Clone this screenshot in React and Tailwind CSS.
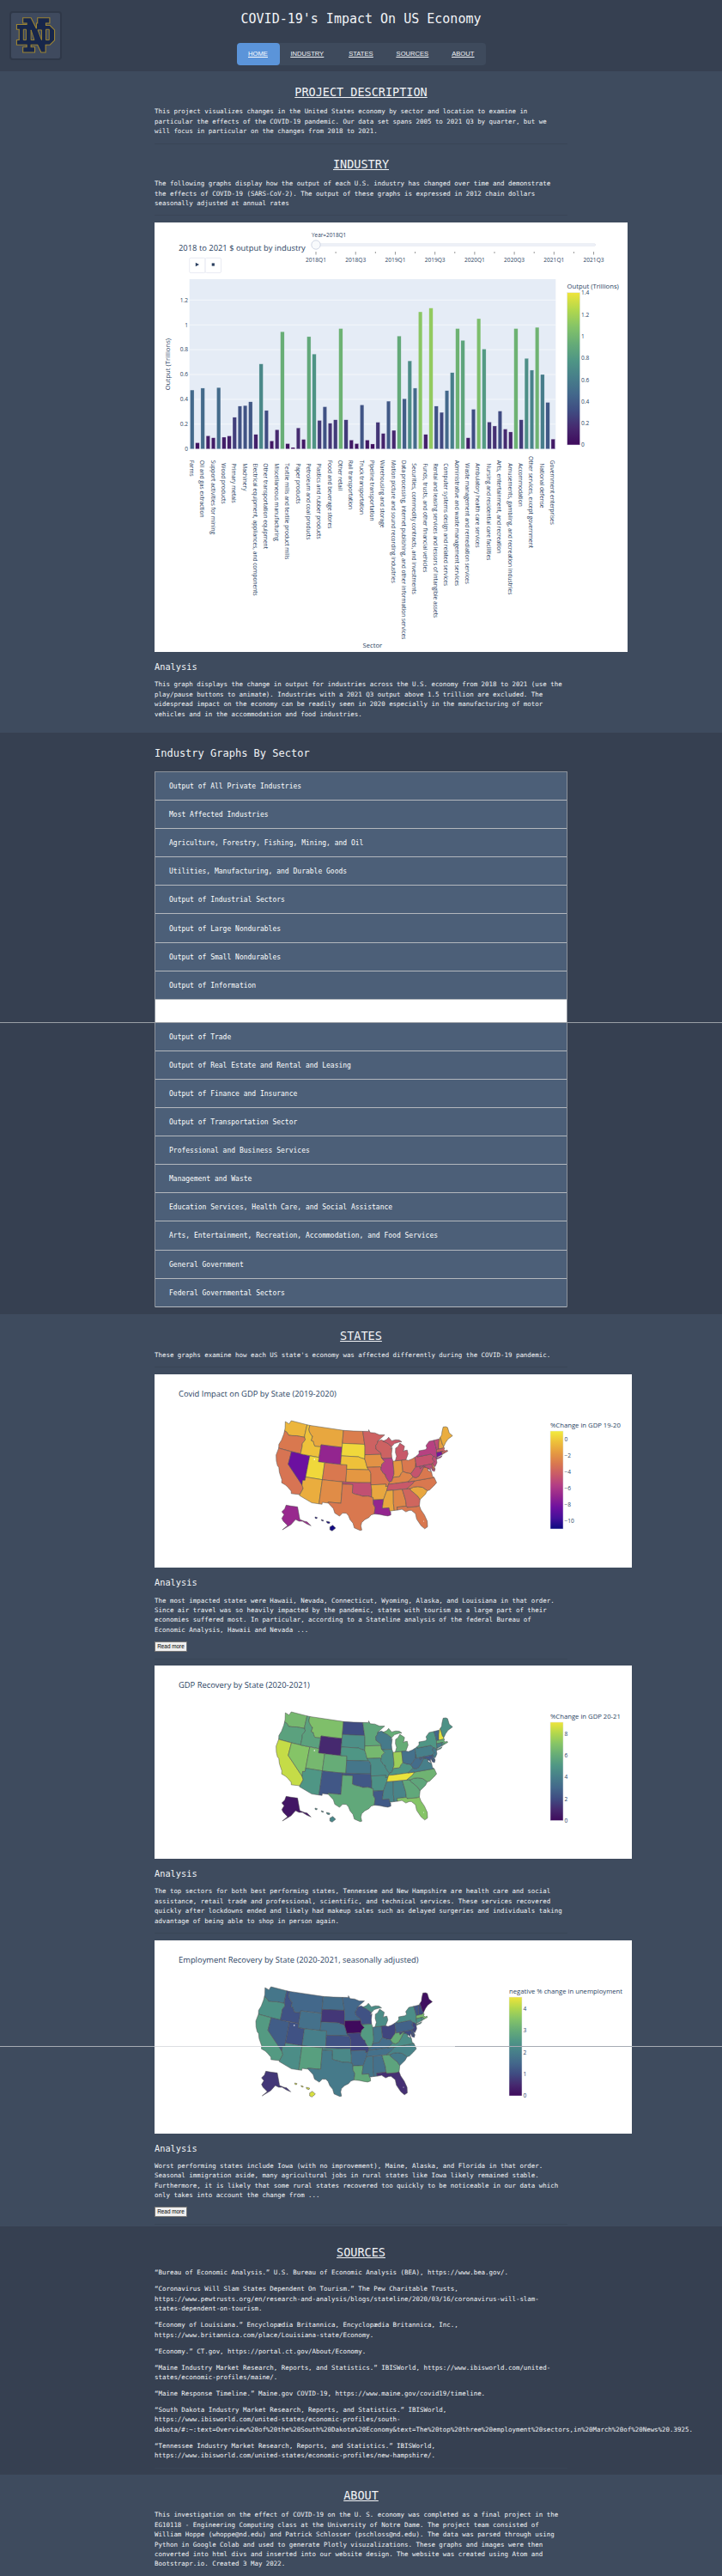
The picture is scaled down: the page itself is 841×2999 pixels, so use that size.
const VIR = ['#3f0a5c','#46296f','#3f4c82','#43688b','#477f8a','#4f9685','#66ac77','#85c467','#b3d84c','#efe43a'];
const PLA = ['#0a0a80','#45109a','#6e10a0','#93258f','#b33d85','#c95a68','#d9784f','#e59a41','#eec03a','#f2ec3c'];

function hex(c) { return [1, 3, 5].map((i) => parseInt(c.slice(i, i + 2), 16)); }
function scale(stops, t) {
  const v = Math.min(1, Math.max(0, t)) * (stops.length - 1);
  const i = Math.min(stops.length - 2, Math.floor(v));
  const a = hex(stops[i]), b = hex(stops[i + 1]), f = v - i;
  return `rgb(${a.map((x, k) => Math.round(x + (b[k] - x) * f)).join(',')})`;
}

const STATES = {
  WA: [[-124.7,48.4],[-123.2,48.15],[-122.8,49],[-117.03,49],[-117.04,46.42],[-116.92,46],[-119,45.93],[-119.6,45.92],[-121.2,45.65],[-122.3,45.55],[-122.8,45.9],[-123.4,46.2],[-124,46.25],[-124.1,46.9]],
  OR: [[-124,46.25],[-123.4,46.2],[-122.8,45.9],[-122.3,45.55],[-121.2,45.65],[-119.6,45.92],[-119,45.93],[-116.92,46],[-116.5,45.5],[-117.2,44.4],[-117.03,43.8],[-117.03,42],[-124.2,42],[-124.5,42.85],[-124.1,44],[-123.95,45.5]],
  CA: [[-124.2,42],[-120,42],[-120,39],[-114.63,35],[-114.13,34.26],[-114.72,32.72],[-117.12,32.53],[-117.3,33.1],[-118.4,33.75],[-119.2,34.15],[-120.5,34.45],[-120.65,35.15],[-121.9,36.6],[-122.5,37.75],[-123,38],[-123.75,39],[-124.35,40.3]],
  NV: [[-120,42],[-114.04,42],[-114.04,36.2],[-114.73,36.1],[-114.63,35],[-120,39]],
  ID: [[-117.03,49],[-116.05,49],[-116.05,48],[-115.7,47.5],[-114.7,46.7],[-114.35,46.65],[-114.5,45.55],[-113.8,45.5],[-113.45,44.95],[-113,44.45],[-111.5,44.55],[-111.05,44.5],[-111.05,42],[-117.03,42],[-117.03,43.8],[-117.2,44.4],[-116.5,45.5],[-116.92,46],[-117.04,46.42]],
  MT: [[-116.05,49],[-104.05,49],[-104.05,45],[-111.05,45],[-111.05,44.5],[-111.5,44.55],[-113,44.45],[-113.45,44.95],[-113.8,45.5],[-114.5,45.55],[-114.35,46.65],[-114.7,46.7],[-115.7,47.5],[-116.05,48]],
  WY: [[-111.05,45],[-107.5,45],[-104.05,45],[-104.05,41],[-107.5,41],[-111.05,41]],
  UT: [[-114.04,42],[-111.05,42],[-111.05,41],[-109.05,41],[-109.05,37],[-114.04,37]],
  CO: [[-109.05,41],[-105.5,41],[-102.05,41],[-102.05,37],[-105.5,37],[-109.05,37]],
  AZ: [[-114.04,37],[-109.05,37],[-109.05,31.33],[-111.07,31.33],[-114.81,32.5],[-114.72,32.72],[-114.13,34.26],[-114.63,35],[-114.73,36.1],[-114.04,36.2]],
  NM: [[-109.05,37],[-103,37],[-103.04,32],[-106.6,32],[-106.53,31.78],[-108.2,31.78],[-108.2,31.33],[-109.05,31.33]],
  ND: [[-104.05,49],[-100.5,49],[-97.23,49],[-96.56,45.94],[-100.5,45.94],[-104.05,45.94]],
  SD: [[-104.05,45.94],[-96.56,45.94],[-96.45,45.3],[-96.45,43.5],[-96.5,42.5],[-97.9,42.8],[-98.5,43],[-104.05,43]],
  NE: [[-104.05,43],[-98.5,43],[-97.9,42.8],[-96.5,42.5],[-96.1,41.6],[-95.9,41],[-95.31,40],[-102.05,40],[-102.05,41],[-104.05,41]],
  KS: [[-102.05,40],[-95.31,40],[-94.9,39.8],[-94.61,39.1],[-94.62,37],[-98.5,37],[-102.05,37]],
  OK: [[-103,37],[-98.5,37],[-94.62,37],[-94.43,35.4],[-94.48,33.64],[-95.5,33.9],[-97,33.85],[-98.1,34.13],[-99.2,34.3],[-100,34.56],[-100,36.5],[-103,36.5]],
  TX: [[-103.04,32],[-103,36.5],[-100,36.5],[-100,34.56],[-99.2,34.3],[-98.1,34.13],[-97,33.85],[-95.5,33.9],[-94.48,33.64],[-94.04,33.55],[-94.04,32],[-93.55,31.2],[-93.85,29.7],[-94.7,29.5],[-95.3,28.9],[-96.4,28.4],[-97.2,27.7],[-97.4,26.9],[-97.15,25.95],[-97.6,25.85],[-99.1,26.4],[-99.5,27.5],[-100.3,28.3],[-100.8,29.25],[-101.4,29.77],[-102.4,29.77],[-103.15,28.98],[-104.5,29.6],[-105,30.65],[-106.53,31.78],[-106.6,32]],
  MN: [[-97.23,49],[-95.15,49],[-95.15,49.38],[-94.6,48.7],[-93,48.6],[-91.4,48.07],[-89.6,48],[-92.05,46.7],[-92.3,46.1],[-92.87,45.6],[-92.75,44.75],[-91.25,43.85],[-91.22,43.5],[-96.45,43.5],[-96.45,45.3],[-96.56,45.94]],
  IA: [[-96.45,43.5],[-91.22,43.5],[-91.1,42.7],[-90.2,41.8],[-91.1,41.2],[-91.42,40.38],[-91.7,40.6],[-95.77,40.58],[-95.9,41],[-96.1,41.6],[-96.5,42.5]],
  MO: [[-95.77,40.58],[-91.7,40.6],[-91.42,40.38],[-91.5,40],[-90.7,39],[-90.2,38.8],[-90.2,38.4],[-89.5,37.3],[-89.13,37],[-89.4,36.5],[-89.7,36],[-90.37,36],[-90.15,36.5],[-94.62,36.5],[-94.62,37],[-94.61,39.1],[-94.9,39.8],[-95.31,40]],
  AR: [[-94.62,36.5],[-90.15,36.5],[-90.37,36],[-89.7,36],[-90.1,35],[-91.15,33],[-94.04,33],[-94.04,33.55],[-94.48,33.64],[-94.43,35.4]],
  LA: [[-94.04,33],[-91.15,33],[-91.6,31],[-89.73,31],[-89.6,30.2],[-89.4,30],[-89.4,29.3],[-90.2,29.1],[-91.3,29.3],[-92.3,29.55],[-93.85,29.7],[-93.55,31.2],[-94.04,32]],
  WI: [[-92.05,46.7],[-90.8,46.9],[-89.1,46.13],[-87.8,45.35],[-87.6,45.1],[-88,44.55],[-87.4,44.9],[-87.8,43.5],[-87.8,42.5],[-90.65,42.5],[-91.1,42.7],[-91.22,43.5],[-91.25,43.85],[-92.75,44.75],[-92.87,45.6],[-92.3,46.1]],
  IL: [[-90.65,42.5],[-87.8,42.5],[-87.53,41.7],[-87.53,39.35],[-87.6,38.7],[-88.05,37.8],[-88.45,37.1],[-89.13,37],[-89.5,37.3],[-90.2,38.4],[-90.2,38.8],[-90.7,39],[-91.5,40],[-91.42,40.38],[-91.1,41.2],[-90.2,41.8],[-91.1,42.7]],
  IN: [[-87.53,41.7],[-87,41.75],[-84.8,41.75],[-84.82,39.1],[-85.4,38.7],[-86,38],[-87.6,38],[-88.05,37.8],[-87.6,38.7],[-87.53,39.35]],
  MI: [[-86.8,41.76],[-84.8,41.75],[-83.45,41.72],[-83.1,42.2],[-82.5,43],[-82.6,43.9],[-83.4,43.9],[-83.9,43.7],[-83.3,44.9],[-84.7,45.75],[-85.5,45],[-86.3,44.7],[-86.5,43.7],[-86.25,42.8]],
  MIU: [[-90.4,46.55],[-89.1,46.13],[-87.8,45.35],[-87.6,45.1],[-86.5,45.8],[-85,46],[-84,46],[-84.8,46.5],[-86,46.65],[-87.4,46.5],[-88.3,47.4],[-89,46.9]],
  OH: [[-84.8,41.75],[-83.45,41.72],[-82.7,41.5],[-81.5,41.7],[-80.52,42],[-80.52,40.64],[-80.8,39.7],[-81.7,39],[-82.3,38.5],[-82.6,38.42],[-83.7,38.65],[-84.82,39.1]],
  KY: [[-89.4,36.5],[-89.13,37],[-88.45,37.1],[-88.05,37.8],[-87.6,38],[-86,38],[-85.4,38.7],[-84.82,39.1],[-83.7,38.65],[-82.6,38.42],[-81.97,37.54],[-83.68,36.6],[-88.07,36.5]],
  TN: [[-90.1,35],[-89.7,36],[-89.4,36.5],[-88.07,36.5],[-83.68,36.6],[-81.68,36.59],[-82.4,36],[-84.32,35]],
  MS: [[-91.15,33],[-90.1,35],[-88.2,35],[-88.47,31.9],[-88.4,30.3],[-89.6,30.2],[-89.73,31],[-91.6,31]],
  AL: [[-88.2,35],[-85.6,35],[-85,32.3],[-85,31],[-87.6,31],[-87.5,30.3],[-88.4,30.3],[-88.47,31.9]],
  GA: [[-85.6,35],[-83.1,35],[-83.35,34.7],[-81.5,33],[-81,32.1],[-81.45,30.7],[-82.2,30.57],[-84.86,30.7],[-85,31],[-85,32.3]],
  FL: [[-87.6,31],[-85,31],[-84.86,30.7],[-82.2,30.57],[-81.45,30.7],[-81.2,29.7],[-80.5,28.4],[-80.03,26.8],[-80.2,25.5],[-81,25.15],[-81.8,26],[-82.7,27.7],[-82.8,29],[-83.8,29.9],[-84.4,29.95],[-85.3,29.7],[-86.3,30.4],[-87.5,30.3]],
  SC: [[-83.35,34.7],[-83.1,35],[-82.3,35.2],[-81,35.15],[-79.7,34.8],[-78.55,33.86],[-79.3,33.1],[-81,32.1],[-81.5,33]],
  NC: [[-84.32,35],[-82.4,36],[-81.68,36.59],[-75.87,36.55],[-75.5,35.25],[-76.5,34.65],[-77.9,33.9],[-78.55,33.86],[-79.7,34.8],[-81,35.15],[-82.3,35.2],[-83.1,35]],
  VA: [[-83.68,36.6],[-81.97,37.54],[-81.2,37.25],[-80.3,37.5],[-79.3,38.4],[-78.35,39.4],[-77.75,39.3],[-77.05,38.85],[-77.3,38.4],[-76.3,37.9],[-76.3,37],[-75.95,36.55],[-81.68,36.59]],
  WV: [[-81.97,37.54],[-82.6,38.42],[-82.3,38.5],[-81.7,39],[-80.8,39.7],[-80.52,40.64],[-80.52,39.72],[-79.48,39.72],[-79.48,39.2],[-78.35,39.65],[-77.75,39.3],[-78.35,39.4],[-79.3,38.4],[-80.3,37.5],[-81.2,37.25]],
  PA: [[-80.52,42],[-79.76,42.27],[-79.76,42],[-75.35,42],[-74.7,41.36],[-75.13,40.97],[-75.2,40.65],[-74.72,40.15],[-75.42,39.8],[-75.79,39.72],[-80.52,39.72]],
  NY: [[-79.76,42.27],[-79,42.7],[-78.9,43.3],[-76.8,43.3],[-76.2,43.55],[-76.3,44.2],[-75,45],[-73.35,45],[-73.25,43.6],[-73.26,42.74],[-73.5,42.05],[-73.65,41],[-73.95,40.75],[-72,41.05],[-72.5,40.7],[-74,40.55],[-74.05,41],[-74.7,41.36],[-75.35,42],[-79.76,42]],
  VT: [[-73.35,45],[-71.5,45],[-72.05,44.1],[-72.45,43],[-72.46,42.73],[-73.26,42.74],[-73.25,43.6]],
  NH: [[-71.5,45],[-71.08,45.3],[-70.98,43.4],[-70.7,43.07],[-70.85,42.87],[-71.3,42.7],[-72.46,42.73],[-72.45,43],[-72.05,44.1]],
  ME: [[-71.08,45.3],[-70.4,45.75],[-70.05,46.4],[-69.2,47.45],[-68.3,47.35],[-67.8,47.05],[-67.8,45.7],[-67,44.85],[-68.8,44.4],[-69.8,43.8],[-70.7,43.07],[-70.98,43.4]],
  MA: [[-73.5,42.05],[-73.26,42.74],[-71.3,42.7],[-70.85,42.87],[-70.65,42.6],[-71,42.3],[-70.6,41.95],[-70,42],[-69.95,41.7],[-71.1,41.5],[-71.38,42.02]],
  CT: [[-73.5,42.05],[-71.8,42.02],[-71.85,41.32],[-73.65,41]],
  RI: [[-71.8,42.02],[-71.38,42.02],[-71.1,41.5],[-71.85,41.32]],
  NJ: [[-74.7,41.36],[-74.05,41],[-74,40.45],[-74.1,39.75],[-74.9,38.95],[-75.5,39.5],[-75.42,39.8],[-74.72,40.15],[-75.2,40.65],[-75.13,40.97]],
  DE: [[-75.79,39.72],[-75.42,39.8],[-75.05,38.45],[-75.7,38.46]],
  MD: [[-79.48,39.72],[-75.79,39.72],[-75.7,38.46],[-75.05,38.45],[-75.4,37.9],[-76,38.2],[-76.2,39],[-76.5,38.5],[-76.3,38],[-77.05,38.85],[-77.75,39.3],[-78.35,39.65],[-79.48,39.2]],
  DC: [[-77.12,38.93],[-77.04,39],[-76.91,38.89],[-77.04,38.79]],
};

const rad = Math.PI / 180;
const p1 = 29.5 * rad, p2 = 45.5 * rad, p0 = 37.5 * rad;
const n = (Math.sin(p1) + Math.sin(p2)) / 2;
const C = Math.cos(p1) ** 2 + 2 * n * Math.sin(p1);
const rho0 = Math.sqrt(C - 2 * n * Math.sin(p0)) / n;
function albers([lon, lat]) {
  const t = n * (lon + 96) * rad;
  const r = Math.sqrt(C - 2 * n * Math.sin(lat * rad)) / n;
  return [r * Math.sin(t), -(rho0 - r * Math.cos(t))];
}
const raw = Object.entries(STATES).map(([k, pts]) => [k, pts.map(albers)]);
const all = raw.flatMap(([, p]) => p);
const minX = Math.min(...all.map((p) => p[0])), maxX = Math.max(...all.map((p) => p[0]));
const minY = Math.min(...all.map((p) => p[1])), maxY = Math.max(...all.map((p) => p[1]));
const MAP_W = 205.6, MAP_H = 127.7;
const SHAPES = raw.map(([k, pts]) => [
  k,
  pts.map(([x, y]) => `${(((x - minX) / (maxX - minX)) * MAP_W).toFixed(2)},${(((y - minY) / (maxY - minY)) * MAP_H).toFixed(2)}`).join(' '),
]);

function local(list) {
  return list.map(([x, y]) => `${((x - 20) / 3).toFixed(2)},${((y - 27) / 3).toFixed(2)}`).join(' ');
}
const ALASKA = local([[55,322],[72,325],[95,328],[103,372],[118,378],[128,380],[142,394],[128,388],[112,378],[100,378],[88,372],[72,390],[42,408],[60,393],[45,378],[40,368],[48,355],[40,345],[50,335]]);
const HAWAII = [
  local([[208,398],[218,392],[228,402],[216,412],[208,408]]),
  local([[196,378],[208,381],[206,386],[198,384]]),
  local([[178,372],[186,375],[184,378],[179,376]]),
  local([[156,363],[164,365],[162,369],[157,368]]),
];

const GDP1 = { WA:-0.7,OR:-3,CA:-3.2,ID:-0.3,NV:-8.4,UT:0.4,AZ:-1,MT:-1.2,WY:-7,CO:-3,NM:-2.2,ND:-2.8,SD:0.4,NE:-0.3,KS:-1.8,OK:-4.8,TX:-3,MN:-4,IA:-2,MO:-3,AR:-1.2,LA:-7,WI:-4,IL:-5.5,IN:-1.8,MI:-4.4,MIU:-4.4,OH:-3,KY:-2.5,TN:-4.4,MS:-1.2,AL:-2.4,GA:-3.8,FL:-3,SC:-1.2,NC:-3,VA:-3,WV:-4.6,PA:-4.6,NY:-5.5,ME:-1,NH:-1.5,VT:-5,MA:-4,CT:-8,RI:-4,NJ:-5,DE:-3,MD:-5,DC:-4,AK:-6.8,HI:-10.8 };
const GDP2 = { WA:6.5,OR:5.5,CA:8.3,ID:5.5,NV:7,UT:6.5,AZ:5,MT:6.8,WY:1,CO:6,NM:2.4,ND:2,SD:4.7,NE:5,KS:3.6,OK:2.4,TX:5.8,MN:5.7,IA:6.5,MO:4.6,AR:4.8,LA:2.5,WI:3.8,IL:4.6,IN:7.5,MI:6,MIU:6,OH:3.4,KY:5,TN:8.9,MS:4.2,AL:4.2,GA:5.8,FL:7,SC:5.7,NC:6.3,VA:4,WV:3.2,PA:4,NY:5,ME:4.8,NH:8.8,VT:3,MA:6,CT:4,RI:5,NJ:3.8,DE:3,MD:2.5,DC:3,AK:0.4,HI:4.3 };
const EMP = { WA:1.8,OR:2.4,CA:2.6,ID:1.1,NV:1.3,UT:1.1,AZ:2.3,MT:1.5,WY:1.7,CO:2,NM:2.7,ND:1.6,SD:0.7,NE:1.7,KS:1.1,OK:2.2,TX:1.9,MN:1.5,IA:0,MO:0.9,AR:1.6,LA:2.9,WI:1.1,IL:2.6,IN:1.8,MI:2.3,MIU:2.3,OH:0.9,KY:1.6,TN:1.7,MS:1.8,AL:1.7,GA:2.8,FL:0.6,SC:1.9,NC:2.1,VA:2.3,WV:3,PA:1.4,NY:2.3,ME:0.1,NH:1,VT:1.2,MA:3.3,CT:2.4,RI:2.5,NJ:0.9,DE:1.2,MD:1,DC:1.5,AK:0.7,HI:4.3 };

const INK = '#2a3f5f';

function Colorbar({ id, stops, x, y, h, title, ticks, w = 15 }) {
  return (
    <g>
      <defs>
        <linearGradient id={id} x1="0" y1="1" x2="0" y2="0">
          {stops.map((c, i) => (
            <stop key={c} offset={i / (stops.length - 1)} stopColor={c} />
          ))}
        </linearGradient>
      </defs>
      <text x={x} y={y - 4.5} fontSize="7.7" fill={INK}>{title}</text>
      <rect x={x} y={y} width={w} height={h} fill={`url(#${id})`} stroke="#e2e5ee" strokeWidth="0.5" />
      {ticks.map(([label, ty]) => (
        <text key={label} x={x + w + 1.5} y={ty + 2.3} fontSize="6.6" fill={INK}>{label}</text>
      ))}
    </g>
  );
}

function MapChart({ id, title, values, color, mapX, cb, width = 556 }) {
  return (
    <svg viewBox={`0 0 ${width} 225`} className="block w-full h-full font-['Open_Sans',sans-serif]">
      <text x="28" y="26" fontSize="9.4" fill={INK}>{title}</text>
      <g transform={`translate(${mapX} 54)`} stroke="#4d4d4d" strokeWidth="0.5" strokeLinejoin="round">
        {SHAPES.map(([k, pts]) => (
          <polygon key={k} points={pts} fill={color(values[k])} />
        ))}
        <polygon points={ALASKA} fill={color(values.AK)} />
        {HAWAII.map((pts) => (
          <polygon key={pts} points={pts} fill={color(values.HI)} />
        ))}
        <circle cx="44.7" cy="45" r="0.8" fill="#fff" stroke="none" />
        <circle cx="172" cy="117" r="0.5" fill="#fff" stroke="none" />
      </g>
      <Colorbar id={id} {...cb} />
    </svg>
  );
}

const BARS = [0.475,0.05,0.49,0.106,0.09,0.495,0.095,0.105,0.255,0.345,0.35,0.38,0.117,0.685,0.31,0.065,0.155,0.945,0.043,0.012,0.17,0.077,0.905,0.765,0.23,0.34,0.207,0.235,0.97,0.235,0.072,0.043,0.355,0.072,0.04,0.215,0.125,0.385,0.15,0.91,0.405,0.71,0.49,1.105,0.117,1.135,0.345,0.295,0.47,0.615,0.97,0.875,0.09,0.32,1.05,0.805,0.217,0.185,0.305,0.16,0.137,0.97,0.235,0.73,0.635,0.98,0.6,0.375,0.08];
const XLABELS = [
  ['Farms',107],['Oil and gas extraction',107],['Support activities for mining',107],['Wood products',118],['Primary metals',118],['Machinery',118],['Electrical equipment, appliances, and components',118],['Other transportation equipment',118],['Miscellaneous manufacturing',118],['Textile mills and textile product mills',118],['Paper products',118],['Petroleum and coal products',118],['Plastics and rubber products',118],['Food and beverage stores',107],['Other retail',107],['Rail transportation',107],['Truck transportation',107],['Pipeline transportation',107],['Warehousing and storage',107],['Motion picture and sound recording industries',107],['Data processing, internet publishing, and other information services',107],['Securities, commodity contracts, and investments',118],['Funds, trusts, and other financial vehicles',118],['Rental and leasing services and lessors of intangible assets',118],['Computer systems design and related services',118],['Administrative and waste management services',107],['Waste management and remediation services',118],['Ambulatory health care services',118],['Nursing and residential care facilities',118],['Arts, entertainment, and recreation',107],['Amusements, gambling, and recreation industries',118],['Accommodation',118],['Other services, except government',93],['National defense',118],['Government enterprises',107],
];
const SLIDER = ['2018Q1','2018Q3','2019Q1','2019Q3','2020Q1','2020Q3','2021Q1','2021Q3'];

function BarChart() {
  const y0 = 522.7, k = 144.5, left = 220.7, pitch = 6.183;
  return (
    <svg viewBox="180 259 551 500" className="block w-full h-full font-['Open_Sans',sans-serif]">
      <text x="208" y="292" fontSize="9.4" fill={INK}>2018 to 2021 $ output by industry</text>
      <text x="363" y="276" fontSize="6.4" fill={INK}>Year=2018Q1</text>
      <rect x="366" y="283.8" width="327.5" height="2.4" rx="1" fill="#f2f5fa" stroke="#d8dcea" strokeWidth="0.6" />
      {Array.from({ length: 15 }, (_, i) => (
        <line key={i} x1={368 + i * 23.11} x2={368 + i * 23.11} y1="293" y2={i % 2 ? 295 : 296.5} stroke="#333" strokeWidth="0.5" />
      ))}
      {SLIDER.map((s, i) => (
        <text key={s} x={368 + i * 46.22} y="304.5" fontSize="6.6" textAnchor="middle" fill={INK}>{s}</text>
      ))}
      <circle cx="368" cy="285" r="5.2" fill="#f8fafc" stroke="#c8cfe0" strokeWidth="0.8" />

      <rect x="220.7" y="300.3" width="18.4" height="17.3" rx="1.5" fill="#fff" stroke="#e3e6f0" strokeWidth="0.8" />
      <rect x="239.1" y="300.3" width="18.4" height="17.3" rx="1.5" fill="#fff" stroke="#e3e6f0" strokeWidth="0.8" />
      <polygon points="227.8,305.8 232,308 227.8,310.2" fill={INK} />
      <rect x="246.7" y="306.4" width="3.2" height="3.2" fill={INK} />

      <rect x={left} y="325" width="426.6" height={y0 - 325} fill="#e5ecf6" />
      {[0.2, 0.4, 0.6, 0.8, 1, 1.2].map((v) => (
        <line key={v} x1={left} x2={647.3} y1={y0 - v * k} y2={y0 - v * k} stroke="#fff" strokeWidth="0.6" />
      ))}
      {BARS.map((v, i) => (
        <rect
          key={i}
          x={left + i * pitch + 0.85}
          y={y0 - v * k}
          width={pitch - 1.7}
          height={v * k}
          fill={scale(VIR, v / 1.4)}
          stroke="#e5ecf6"
          strokeWidth="0.3"
        />
      ))}
      {[['0', 0], ['0.2', 0.2], ['0.4', 0.4], ['0.6', 0.6], ['0.8', 0.8], ['1', 1], ['1.2', 1.2]].map(([l, v]) => (
        <text key={l} x="219" y={y0 - v * k + 2.3} fontSize="6.6" textAnchor="end" fill={INK}>{l}</text>
      ))}
      <text transform="translate(197.5 424) rotate(-90)" fontSize="7.7" textAnchor="middle" fill={INK}>Output (Trillions)</text>
      {XLABELS.map(([l, s], i) => (
        <text key={l} transform={`translate(${221 + i * 12.35} ${500 + s / 3}) rotate(90)`} fontSize="6.6" fill={INK}>{l}</text>
      ))}
      <text x="433.8" y="753.5" fontSize="7.7" textAnchor="middle" fill={INK}>Sector</text>
      <Colorbar
        id="cb0"
        stops={VIR}
        x={660.6}
        y={340.7}
        h={177.3}
        title="Output (Trillions)"
        ticks={[['1.4', 340.7], ['1.2', 366.3], ['1', 391.3], ['0.8', 416.7], ['0.6', 442.3], ['0.4', 467.7], ['0.2', 492.7], ['0', 518]]}
      />
    </svg>
  );
}

function Lines({ lines, className = '' }) {
  return (
    <p className={`text-[7.45px] leading-[11.4px] ${className}`}>
      {lines.map((l) => (
        <span key={l} className="block whitespace-nowrap">{l}</span>
      ))}
    </p>
  );
}

function Heading({ children, className = '' }) {
  return <h2 className={`text-center text-[13.5px] leading-[20px] underline ${className}`}>{children}</h2>;
}

function Analysis({ lines, more }) {
  return (
    <div>
      <h3 className="mt-[10px] text-[10.3px] leading-[14px]">Analysis</h3>
      <Lines lines={lines} className="mt-[8.3px]" />
      {more && (
        <button className="mt-[8px] block w-[38px] h-[12px] bg-[#efefef] border border-[#767676] text-black text-[6.4px] leading-[10px] font-['Liberation_Sans',sans-serif]">
          Read more
        </button>
      )}
    </div>
  );
}

function Rule({ className = '' }) {
  return <div className={`h-px w-[481px] bg-[#394556] ${className}`} />;
}

const ROWS_A = ['Output of All Private Industries','Most Affected Industries','Agriculture, Forestry, Fishing, Mining, and Oil','Utilities, Manufacturing, and Durable Goods','Output of Industrial Sectors','Output of Large Nondurables','Output of Small Nondurables','Output of Information'];
const ROWS_B = ['Output of Trade','Output of Real Estate and Rental and Leasing','Output of Finance and Insurance','Output of Transportation Sector','Professional and Business Services','Management and Waste','Education Services, Health Care, and Social Assistance','Arts, Entertainment, Recreation, Accommodation, and Food Services','General Government','Federal Governmental Sectors'];

function Row({ label }) {
  return (
    <div className="h-[33.1px] pl-[16px] pt-[2px] flex items-center bg-[#4c5f78] border-b border-[#b3b7bd] text-[8px] text-white">
      {label}
    </div>
  );
}

function Logo() {
  return (
    <div className="w-[61px] h-[57px] rounded-[4px] bg-[#3f4a5e] border-2 border-[#2f3848]">
      <svg viewBox="37 42 176 168" className="block w-full h-full">
        <path
          d="M78 60H108L128 100V80H132V60H177V80H163V88H178L195 105V143L178 160H162V188H145L132 160H108V168H122V188H78V168H92V160H55V142H64V103H55V85H92V80H78Z"
          fill="#17264a"
          stroke="#9c8433"
          strokeWidth="3.5"
          strokeLinejoin="miter"
        />
        <path d="M80 103H90V142H80ZM163 103H175V142H163ZM108 105L120 142H108Z" fill="#3f4a5e" stroke="#9c8433" strokeWidth="3" />
        <path d="M133 105L147 142V105Z" fill="#3f4a5e" stroke="#9c8433" strokeWidth="3" />
      </svg>
    </div>
  );
}

export default function App() {
  return (
    <div className="relative w-[841px] h-[2999px] overflow-hidden bg-[#3e4b5e] text-[#f1f3f6] font-['DejaVu_Sans_Mono',monospace]">
      <header className="h-[83px] bg-[#364051] grid grid-cols-[1fr_auto_1fr]">
        <div className="pl-[11px] pt-[13px]">
          <Logo />
        </div>
        <div className="flex flex-col items-center pt-[12px]">
          <h1 className="text-[15px] leading-[20px]">COVID-19's Impact On US Economy</h1>
          <nav className="mt-[18px] w-[290px] h-[26px] flex items-center rounded-[4px] bg-[#3e4a5c] text-[7.6px] underline font-['Liberation_Sans',sans-serif]">
            <a className="w-[50px] h-[26px] flex items-center justify-center rounded-[4px] bg-[#5b94d9] text-white">HOME</a>
            <a className="ml-[13px]">INDUSTRY</a>
            <a className="ml-[29px]">STATES</a>
            <a className="ml-[27px]">SOURCES</a>
            <a className="ml-[27px]">ABOUT</a>
          </nav>
        </div>
        <div />
      </header>

      <section className="h-[770px] pt-[14px]">
        <div className="w-[481px] mx-auto">
          <Heading>PROJECT DESCRIPTION</Heading>
          <Lines
            className="mt-[7.3px]"
            lines={[
              'This project visualizes changes in the United States economy by sector and location to examine in',
              'particular the effects of the COVID-19 pandemic. Our data set spans 2005 to 2021 Q3 by quarter, but we',
              'will focus in particular on the changes from 2018 to 2021.',
            ]}
          />
          <Rule className="mt-[8.5px]" />
          <Heading className="mt-[13px]">INDUSTRY</Heading>
          <Lines
            className="mt-[7.3px]"
            lines={[
              'The following graphs display how the output of each U.S. industry has changed over time and demonstrate',
              'the effects of COVID-19 (SARS-CoV-2). The output of these graphs is expressed in 2012 chain dollars',
              'seasonally adjusted at annual rates',
            ]}
          />
          <Rule className="mt-[7.5px]" />
          <div className="mt-[8px] w-[551px] h-[500px] bg-white">
            <BarChart />
          </div>
          <Analysis
            lines={[
              'This graph displays the change in output for industries across the U.S. economy from 2018 to 2021 (use the',
              'play/pause buttons to animate). Industries with a 2021 Q3 output above 1.5 trillion are excluded. The',
              'widespread impact on the economy can be readily seen in 2020 especially in the manufacturing of motor',
              'vehicles and in the accommodation and food industries.',
            ]}
          />
        </div>
      </section>

      <section className="h-[677px] pt-[16px] bg-[#364051]">
        <div className="w-[481px] mx-auto">
          <h3 className="text-[12px] leading-[16px]">Industry Graphs By Sector</h3>
          <div className="mt-[13px] border-x border-t border-[#8d939c] rounded-[1px]">
            {ROWS_A.map((r) => (
              <Row key={r} label={r} />
            ))}
            <div className="h-[27px] bg-white" />
            {ROWS_B.map((r) => (
              <Row key={r} label={r} />
            ))}
          </div>
        </div>
      </section>

      <section className="h-[1062px] pt-[15px]">
        <div className="w-[481px] mx-auto">
          <Heading>STATES</Heading>
          <Lines className="mt-[7.3px]" lines={["These graphs examine how each US state's economy was affected differently during the COVID-19 pandemic."]} />
          <Rule className="mt-[7.5px]" />
          <div className="mt-[8px] w-[556px] h-[225px] bg-white">
            <MapChart
              id="cb1"
              title="Covid Impact on GDP by State (2019-2020)"
              values={GDP1}
              color={(v) => scale(PLA, (v + 11) / 12)}
              mapX={141.6}
              cb={{ stops: PLA, x: 461, y: 66, h: 114, title: '%Change in GDP 19-20', ticks: [['0', 75.7], ['−2', 94.7], ['−4', 113.7], ['−6', 132.7], ['−8', 151.7], ['−10', 170.7]] }}
            />
          </div>
          <Analysis
            more
            lines={[
              'The most impacted states were Hawaii, Nevada, Connecticut, Wyoming, Alaska, and Louisiana in that order.',
              'Since air travel was so heavily impacted by the pandemic, states with tourism as a large part of their',
              'economies suffered most. In particular, according to a Stateline analysis of the federal Bureau of',
              'Economic Analysis, Hawaii and Nevada ...',
            ]}
          />
          <Rule className="mt-[8px]" />
          <div className="mt-[7px] w-[556px] h-[225px] bg-white">
            <MapChart
              id="cb2"
              title="GDP Recovery by State (2020-2021)"
              values={GDP2}
              color={(v) => scale(VIR, v / 9)}
              mapX={141.6}
              cb={{ stops: VIR, x: 461, y: 66, h: 114.5, title: '%Change in GDP 20-21', ticks: [['8', 79.3], ['6', 104.3], ['4', 129.7], ['2', 155.3], ['0', 180.7]] }}
            />
          </div>
          <Analysis
            lines={[
              'The top sectors for both best performing states, Tennessee and New Hampshire are health care and social',
              'assistance, retail trade and professional, scientific, and technical services. These services recovered',
              'quickly after lockdowns ended and likely had makeup sales such as delayed surgeries and individuals taking',
              'advantage of being able to shop in person again.',
            ]}
          />
          <Rule className="mt-[8px]" />
          <div className="mt-[7.5px] w-[556px] h-[225px] bg-white">
            <MapChart
              id="cb3"
              title="Employment Recovery by State (2020-2021, seasonally adjusted)"
              values={EMP}
              color={(v) => scale(VIR, v / 4.5)}
              mapX={118}
              cb={{ stops: VIR, x: 413, y: 66, h: 115, title: 'negative % change in unemployment', ticks: [['4', 79.3], ['3', 104.7], ['2', 130.3], ['1', 155.7], ['0', 181]] }}
            />
          </div>
          <Analysis
            more
            lines={[
              'Worst performing states include Iowa (with no improvement), Maine, Alaska, and Florida in that order.',
              'Seasonal immigration aside, many agricultural jobs in rural states like Iowa likely remained stable.',
              'Furthermore, it is likely that some rural states recovered too quickly to be noticeable in our data which',
              'only takes into account the change from ...',
            ]}
          />
          <Rule className="mt-[8px]" />
        </div>
      </section>

      <section className="h-[289px] pt-[20px] bg-[#364051]">
        <div className="w-[481px] mx-auto">
          <Heading>SOURCES</Heading>
          <div className="mt-[8.3px] flex flex-col gap-[7.6px]">
            <Lines lines={['“Bureau of Economic Analysis.” U.S. Bureau of Economic Analysis (BEA), https://www.bea.gov/.']} />
            <Lines lines={['“Coronavirus Will Slam States Dependent On Tourism.” The Pew Charitable Trusts,', 'https://www.pewtrusts.org/en/research-and-analysis/blogs/stateline/2020/03/16/coronavirus-will-slam-', 'states-dependent-on-tourism.']} />
            <Lines lines={['“Economy of Louisiana.” Encyclopædia Britannica, Encyclopædia Britannica, Inc.,', 'https://www.britannica.com/place/Louisiana-state/Economy.']} />
            <Lines lines={['“Economy.” CT.gov, https://portal.ct.gov/About/Economy.']} />
            <Lines lines={['“Maine Industry Market Research, Reports, and Statistics.” IBISWorld, https://www.ibisworld.com/united-', 'states/economic-profiles/maine/.']} />
            <Lines lines={['“Maine Response Timeline.” Maine.gov COVID-19, https://www.maine.gov/covid19/timeline.']} />
            <Lines lines={['“South Dakota Industry Market Research, Reports, and Statistics.” IBISWorld,', 'https://www.ibisworld.com/united-states/economic-profiles/south-', 'dakota/#:~:text=Overview%20of%20the%20South%20Dakota%20Economy&text=The%20top%20three%20employment%20sectors,in%20March%20of%20News%20.3925.']} />
            <Lines lines={['“Tennessee Industry Market Research, Reports, and Statistics.” IBISWorld,', 'https://www.ibisworld.com/united-states/economic-profiles/new-hampshire/.']} />
          </div>
          <Rule className="mt-[8px] bg-[#3e4a5c]" />
        </div>
      </section>

      <section className="pt-[14px]">
        <div className="w-[481px] mx-auto">
          <Heading>ABOUT</Heading>
          <Lines
            className="mt-[7.3px]"
            lines={[
              'This investigation on the effect of COVID-19 on the U. S. economy was completed as a final project in the',
              'EG10118 - Engineering Computing class at the University of Notre Dame. The project team consisted of',
              'William Hoppe (whoppe@nd.edu) and Patrick Schlosser (pschloss@nd.edu). The data was parsed through using',
              'Python in Google Colab and used to generate Plotly visuzalizations. These graphs and images were then',
              'converted into html divs and inserted into our website design. The website was created using Atom and',
              'Bootstrapr.io. Created 3 May 2022.',
            ]}
          />
        </div>
      </section>

      <div className="absolute left-0 top-[1190px] h-px w-full bg-[#9a9fa6]" />
      <div className="absolute left-0 top-[2382px] h-px w-full bg-[#a6abb3]" />
      <div className="absolute left-[180px] top-[2382px] h-px w-[350px] bg-[#dcdee2]" />
    </div>
  );
}
